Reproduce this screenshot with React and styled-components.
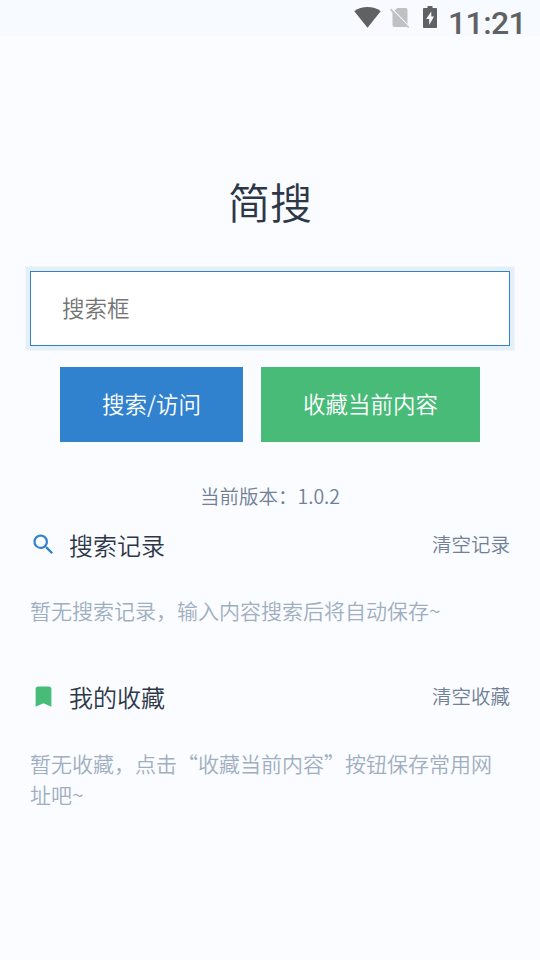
import styled, { createGlobalStyle } from 'styled-components';

const sections = [
  {
    id: 'history',
    title: '搜索记录',
    clear: '清空记录',
    icon: 'search',
    empty: '暂无搜索记录，输入内容搜索后将自动保存~',
  },
  {
    id: 'favorites',
    title: '我的收藏',
    clear: '清空收藏',
    icon: 'bookmark',
    empty: '暂无收藏，点击“收藏当前内容”按钮保存常用网址吧~',
  },
];

const iconPaths = {
  search:
    'M15.5 14h-.79l-.28-.27A6.471 6.471 0 0 0 16 9.5 6.5 6.5 0 1 0 9.5 16c1.61 0 3.09-.59 4.23-1.57l.27.28v.79l5 4.99L20.49 19l-4.99-5zm-6 0C7.01 14 5 11.99 5 9.5S7.01 5 9.5 5 14 7.01 14 9.5 11.99 14 9.5 14z',
  bookmark: 'M17 3H7c-1.1 0-1.99.9-1.99 2L5 21l7-3 7 3V5c0-1.1-.9-2-2-2z',
};

function StatusBar() {
  return (
    <Bar>
      <svg width="27" height="36" viewBox="0 0 27 36">
        <path d="M0.300 11.200Q6 7 13.500 7T26.700 11.200L13.500 27.700z" fill="#5f6163" />
      </svg>
      <svg width="20" height="36" viewBox="0 0 20 36">
        <path
          d="M7.500 8h8.300q1.700 0 1.700 1.700v14.200L4.500 10.500zM2.500 11.200L17 26q-.4 1-1.500 1H4.200q-1.700 0-1.700-1.700z"
          fill="#bfc1c3"
        />
        <path d="M0.500 9.200l18.200 18.300" stroke="#bfc1c3" strokeWidth="1.700" />
      </svg>
      <svg width="14" height="36" viewBox="0 0 14 36">
        <path
          d="M4.500 6h5v2h3.700q.8 0 .8.800v18.400q0 .8-.8.800H.8Q0 28 0 27.200V8.800Q0 8 .8 8h3.700z"
          fill="#5f6163"
        />
        <path d="M8.300 11.500L3.200 19h3v6l4.800-8.500H8.300z" fill="#f7fbff" />
      </svg>
      <Clock>11:21</Clock>
    </Bar>
  );
}

function App() {
  return (
    <>
      <GlobalStyle />
      <StatusBar />
      <Page>
        <Title>简搜</Title>
        <SearchInput placeholder="搜索框" />
        <Buttons>
          <Button $color="#3182ce">搜索/访问</Button>
          <Button $color="#48bb78">收藏当前内容</Button>
        </Buttons>
        <Version>当前版本：1.0.2</Version>
        {sections.map((s) => (
          <Section key={s.id}>
            <SectionHeader>
              <SectionIcon viewBox="0 0 24 24" $color={s.icon === 'search' ? '#3182ce' : '#48bb78'}>
                <path d={iconPaths[s.icon]} />
              </SectionIcon>
              <h2>{s.title}</h2>
              <Clear>{s.clear}</Clear>
            </SectionHeader>
            <Empty>{s.empty}</Empty>
          </Section>
        ))}
      </Page>
    </>
  );
}
export default App;

const GlobalStyle = createGlobalStyle`
  * {
    box-sizing: border-box;
  }
  body {
    margin: 0;
    background: #fafcff;
    color: #2d3748;
    font-family: 'Noto Sans CJK SC', sans-serif;
    font-weight: 350;
  }
`;

const Bar = styled.header`
  display: flex;
  justify-content: flex-end;
  height: 36px;
  padding-right: 13px;
  background: #f7fbff;
  svg {
    flex: none;
    margin-right: 9px;
  }
  svg + svg {
    margin-right: 13px;
  }
  svg + svg + svg {
    margin-right: 11px;
  }
`;

const Clock = styled.span`
  width: 79px;
  font: 500 32px/46px Roboto, sans-serif;
  letter-spacing: -0.6px;
  color: #5f6163;
`;

const Page = styled.main`
  display: flex;
  flex-direction: column;
  padding: 134px 30px 0;
`;

const Title = styled.h1`
  margin: 0;
  font-size: 42px;
  font-weight: 350;
  line-height: 62px;
  text-align: center;
`;

const SearchInput = styled.input`
  height: 75px;
  margin-top: 39px;
  padding: 0 31px 4px;
  border: 1px solid #3182ce;
  border-radius: 0;
  outline: none;
  background: #fff;
  box-shadow: 0 0 0 4.5px rgba(49, 130, 206, 0.1);
  font: 350 22.5px 'Noto Sans CJK SC', sans-serif;
  &::placeholder {
    color: #757575;
  }
`;

const Buttons = styled.div`
  display: flex;
  justify-content: center;
  gap: 18px;
  margin-top: 21px;
`;

const Button = styled.button`
  height: 75px;
  padding: 0 42px 4px;
  border: 0;
  background: ${(p) => p.$color};
  color: #fff;
  font: 350 22.5px 'Noto Sans CJK SC', sans-serif;
`;

const Version = styled.p`
  margin: 39px 0 0;
  color: #718096;
  font-size: 19.5px;
  line-height: 29px;
  text-align: center;
`;

const Section = styled.section`
  margin-bottom: 36.1px;
`;

const SectionHeader = styled.div`
  display: flex;
  align-items: center;
  height: 67px;
  padding-top: 1.5px;
  h2 {
    margin: 0 auto 0 12px;
    font-size: 24px;
    font-weight: 350;
  }
`;

const SectionIcon = styled.svg`
  width: 27px;
  height: 27px;
  fill: ${(p) => p.$color};
`;

const Clear = styled.span`
  padding-bottom: 1.5px;
  color: #718096;
  font-size: 19.5px;
`;

const Empty = styled.p`
  margin: 18.4px 0 0;
  color: #a0aec0;
  font-size: 21px;
  line-height: 31px;
`;
